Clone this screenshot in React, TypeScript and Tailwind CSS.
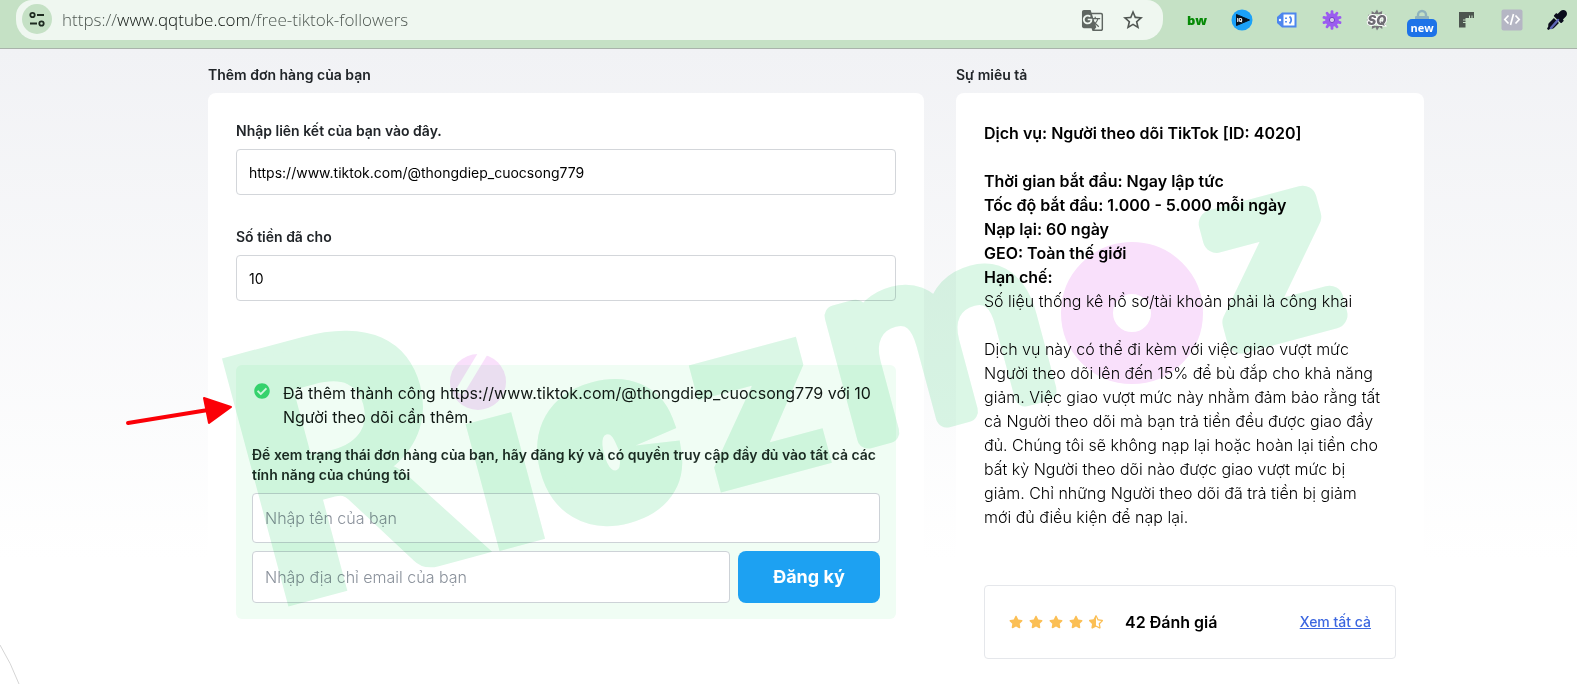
import { useState } from "react";
import type { FormEvent, ReactNode } from "react";
import { FaCheckCircle, FaEyeDropper, FaStar, FaStarHalfAlt } from "react-icons/fa";
import { MdGTranslate, MdStarBorder } from "react-icons/md";

type Extension = {
  name: string;
  icon: ReactNode;
};

const teeth = [0, 36, 72, 108, 144, 180, 216, 252, 288, 324];
const spikes = [0, 30, 60, 90, 120, 150, 180, 210, 240, 270, 300, 330];

const extensions: Extension[] = [
  {
    name: "BuiltWith",
    icon: (
      <svg viewBox="0 0 24 24" className="size-6">
        <text
          x="12"
          y="17"
          textAnchor="middle"
          className="fill-[#078a07] font-['Open_Sans',sans-serif] text-[13px] font-extrabold"
        >
          bw
        </text>
      </svg>
    ),
  },
  {
    name: "IQ",
    icon: (
      <svg viewBox="0 0 24 24" className="size-6">
        <circle cx="12" cy="12" r="10.5" fill="#1ba1f8" />
        <path d="M6.5 6.5 19.5 12 6.5 17.5Z" fill="#06131f" stroke="#06131f" strokeLinejoin="round" />
        <text x="7" y="14" fill="#fff" className="font-['Inter',sans-serif] text-[5px] font-black">
          IQ
        </text>
      </svg>
    ),
  },
  {
    name: "Tag",
    icon: (
      <svg viewBox="0 0 24 24" className="size-6">
        <path d="M7 4.5h14.5v15H7L2 15V9Z" fill="#4d86ee" />
        <rect x="8.5" y="6.5" width="11" height="11" fill="#fff" />
        <circle cx="5" cy="12" r="1.2" fill="#fff" />
        <path d="M11 9.5v1.6M11 13v1.6M14.5 8.5c2.3 1.8 2.3 5.2 0 7" stroke="#4d86ee" strokeWidth="1.8" fill="none" />
      </svg>
    ),
  },
  {
    name: "Settings",
    icon: (
      <svg viewBox="0 0 24 24" className="size-6">
        {teeth.map((deg) => (
          <rect
            key={deg}
            x="10.6"
            y="2.2"
            width="2.8"
            height="6"
            rx="1.2"
            fill="#9b5cf0"
            transform={`rotate(${deg} 12 12)`}
          />
        ))}
        <circle cx="12" cy="12" r="6.8" fill="#9b5cf0" />
        <circle cx="12" cy="12" r="2.6" fill="#d3cbe6" stroke="#7540c6" />
      </svg>
    ),
  },
  {
    name: "SQ",
    icon: (
      <svg viewBox="0 0 24 24" className="size-6">
        {spikes.map((deg) => (
          <path key={deg} d="M9 6 12 1.5 14 6Z" fill="#77767b" transform={`rotate(${deg} 12 12)`} />
        ))}
        <text
          x="12"
          y="17"
          textAnchor="middle"
          className="fill-[#6f6d74] stroke-white stroke-2 font-['Inter',sans-serif] text-[13px] font-black italic"
          style={{ paintOrder: "stroke" }}
        >
          SQ
        </text>
      </svg>
    ),
  },
  {
    name: "Lock",
    icon: (
      <span className="relative flex size-6 justify-center">
        <svg viewBox="0 0 24 24" className="size-6">
          <path d="M8 10V7a4 4 0 0 1 8 0v3" fill="none" stroke="#8fb3bd" strokeWidth="2.4" />
          <rect x="5" y="8" width="14" height="10" rx="1" fill="#8fb3bd" />
        </svg>
        <span className="absolute top-[11px] rounded-[5px] bg-[#1d73e8] px-[3px] font-['Open_Sans',sans-serif] text-[11px] leading-[18px] font-bold text-white">
          new
        </span>
      </span>
    ),
  },
  {
    name: "Ruler",
    icon: (
      <svg viewBox="0 0 24 24" className="size-6">
        <path
          d="M4 4h15v6h-1.5V7.5h-1V10H15V7.5h-1V10h-3.500v1.500H8v1h2.500V14H8v1h2.500v4.500H4Z"
          fill="#4c554f"
        />
      </svg>
    ),
  },
  {
    name: "Code",
    icon: (
      <svg viewBox="0 0 24 24" className="size-6">
        <rect x="1.500" y="1.500" width="21" height="21" rx="2" fill="#b5b6c4" />
        <path
          d="M8.500 7.500 4.800 11.500l3.700 4M15.500 7.500l3.700 4-3.700 4M13.500 6l-3 11"
          fill="none"
          stroke="#fff"
          strokeWidth="1.700"
        />
      </svg>
    ),
  },
  {
    name: "Color picker",
    icon: (
      <span className="relative block size-6">
        <FaEyeDropper className="m-[2px] size-5 text-[#0b0d1c]" />
        <svg viewBox="0 0 24 24" className="absolute inset-0 size-6">
          <path d="M6 18 13 10" stroke="#5d66b5" strokeWidth="2.500" strokeLinecap="round" />
        </svg>
      </span>
    ),
  },
];

const details = [
  "Thời gian bắt đầu: Ngay lập tức",
  "Tốc độ bắt đầu: 1.000 - 5.000 mỗi ngày",
  "Nạp lại: 60 ngày",
  "GEO: Toàn thế giới",
  "Hạn chế:",
];

function BrowserBar() {
  return (
    <header className="flex h-[49px] items-start border-b border-[#a9b3ab] bg-[#c5e1c5]">
      <div className="ml-4 flex h-10 flex-1 items-center rounded-t-2xl rounded-b-[20px] bg-[#eff7f0] pr-[18px] pl-[6px]">
        <button
          aria-label="Site information"
          className="mb-[2px] flex size-[30px] items-center justify-center rounded-full bg-[#c5e1c5]"
        >
          <svg viewBox="0 0 18 18" className="size-[18px]" fill="none" stroke="#1d2b20" strokeWidth="1.800">
            <circle cx="4.500" cy="5" r="2.200" />
            <path d="M9 5h7M2 13.500h7" />
            <circle cx="13.500" cy="13.500" r="2.200" />
          </svg>
        </button>
        <p className="ml-[10px] flex-1 font-['Open_Sans',sans-serif] text-[17px] font-light text-[#4f5852]">
          https://<span className="text-[#0c120e]">www.qqtube.com</span>/free-tiktok-followers
        </p>
        <button aria-label="Translate">
          <MdGTranslate className="size-[23px] text-[#5f6661]" />
        </button>
        <button aria-label="Bookmark" className="ml-[17px]">
          <MdStarBorder className="size-6 text-[#515753]" />
        </button>
      </div>
      <div className="mr-2 ml-[22px] flex h-10 items-center gap-[21px]">
        {extensions.map((item) => (
          <button key={item.name} aria-label={item.name} className="size-6">
            {item.icon}
          </button>
        ))}
      </div>
    </header>
  );
}

function OrderForm() {
  const [link, setLink] = useState("https://www.tiktok.com/@thongdiep_cuocsong779");
  const [amount, setAmount] = useState("10");
  const [name, setName] = useState("");
  const [email, setEmail] = useState("");

  const handleSubmit = (e: FormEvent) => {
    e.preventDefault();
  };

  return (
    <section className="flex flex-col">
      <h2 className="text-sm leading-5 font-semibold text-[#212529]">Thêm đơn hàng của bạn</h2>
      <div className="mt-2 flex-1 rounded-lg bg-white p-7">
        <label htmlFor="link" className="block text-sm leading-5 font-semibold text-[#212529]">
          Nhập liên kết của bạn vào đây.
        </label>
        <input
          id="link"
          className="mt-2 h-[46px] w-full rounded-sm border border-[#d3d6da] px-3 text-sm text-black"
          value={link}
          onChange={(e) => setLink(e.target.value)}
        />
        <label htmlFor="amount" className="mt-8 block text-sm leading-5 font-semibold text-[#212529]">
          Số tiền đã cho
        </label>
        <input
          id="amount"
          className="mt-2 h-[46px] w-full rounded-sm border border-[#d3d6da] px-3 text-sm text-black"
          value={amount}
          onChange={(e) => setAmount(e.target.value)}
        />

        <form onSubmit={handleSubmit} className="mt-16 rounded-md bg-[#f0fdf4] p-4">
          <div className="flex gap-[13px]">
            <FaCheckCircle className="mt-[2px] ml-[2px] size-4 shrink-0 text-[#3dd978]" />
            <p className="text-[#101814]">
              Đã thêm thành công https://www.tiktok.com/@thongdiep_cuocsong779 với 10 Người theo dõi cần thêm.
            </p>
          </div>
          <p className="mt-4 text-sm leading-5 font-semibold text-[#1d2b24]">
            Để xem trạng thái đơn hàng của bạn, hãy đăng ký và có quyền truy cập đầy đủ vào tất cả các tính năng
            của chúng tôi
          </p>
          <input
            aria-label="Nhập tên của bạn"
            placeholder="Nhập tên của bạn"
            className="mt-2 h-[50px] w-full rounded-sm border border-[#cdd2d7] bg-white px-3 font-light placeholder:text-[#8a919b]"
            value={name}
            onChange={(e) => setName(e.target.value)}
          />
          <div className="mt-2 flex gap-2">
            <input
              type="email"
              aria-label="Nhập địa chỉ email của bạn"
              placeholder="Nhập địa chỉ email của bạn"
              className="h-[52px] min-w-0 flex-1 rounded-sm border border-[#cdd2d7] bg-white px-3 font-light placeholder:text-[#8a919b]"
              value={email}
              onChange={(e) => setEmail(e.target.value)}
            />
            <button type="submit" className="w-[142px] rounded-lg bg-[#1da1f2] text-lg font-bold text-white">
              Đăng ký
            </button>
          </div>
        </form>
      </div>
    </section>
  );
}

function Description() {
  return (
    <section className="flex flex-col">
      <h2 className="text-sm leading-5 font-semibold text-[#212529]">Sự miêu tả</h2>
      <div className="mt-2 flex-1 rounded-lg bg-white p-7 font-light text-black">
        <p className="mb-6 font-semibold">Dịch vụ: Người theo dõi TikTok [ID: 4020]</p>
        {details.map((line) => (
          <p key={line} className="font-semibold">
            {line}
          </p>
        ))}
        <p>Số liệu thống kê hồ sơ/tài khoản phải là công khai</p>
        <p className="mt-6 pr-3">
          Dịch vụ này có thể đi kèm với việc giao vượt mức Người theo dõi lên đến 15% để bù đắp cho khả năng giảm.
          Việc giao vượt mức này nhằm đảm bảo rằng tất cả Người theo dõi mà bạn trả tiền đều được giao đầy đủ. Chúng
          tôi sẽ không nạp lại hoặc hoàn lại tiền cho bất kỳ Người theo dõi nào được giao vượt mức bị giảm. Chỉ những
          Người theo dõi đã trả tiền bị giảm mới đủ điều kiện để nạp lại.
        </p>
        <div className="mt-14 flex h-[74px] items-center rounded-sm border border-[#e5e7eb] px-6">
          <div className="flex gap-[6px] text-[#fbbf55]">
            <FaStar className="size-[14px]" />
            <FaStar className="size-[14px]" />
            <FaStar className="size-[14px]" />
            <FaStar className="size-[14px]" />
            <FaStarHalfAlt className="size-[14px]" />
          </div>
          <p className="ml-[22px] flex-1 font-semibold">42 Đánh giá</p>
          <a href="#reviews" className="text-sm font-medium text-[#3b66e0] underline">
            Xem tất cả
          </a>
        </div>
      </div>
    </section>
  );
}

function Watermark() {
  return (
    <svg
      viewBox="0 0 1577 684"
      aria-hidden="true"
      className="pointer-events-none absolute top-0 left-0 w-full overflow-visible mix-blend-multiply"
    >
      <mask id="slash">
        <rect width="1577" height="684" fill="#fff" />
        <path d="M488 345 459 393" stroke="#000" strokeWidth="9" />
      </mask>
      <g fill="#dbf7e6" stroke="#dbf7e6">
        <text
          transform="translate(267 607) rotate(-15)"
          fontSize="340"
          strokeWidth="10"
          className="font-['Lato',sans-serif] font-black"
        >
          R
        </text>
        <g className="font-['Inter',sans-serif] font-black">
          <text transform="translate(488 554) rotate(-15)" fontSize="240" stroke="none">
            ı
          </text>
          <text transform="translate(560 528) rotate(-15)" fontSize="220" strokeWidth="22">
            c
          </text>
          <text transform="translate(708 496) rotate(-15)" fontSize="240" stroke="none">
            z
          </text>
        </g>
        <g className="font-['DejaVu_Sans',sans-serif]" strokeLinejoin="round" strokeLinecap="round">
          <text transform="translate(848 443) rotate(-15)" fontSize="230" strokeWidth="22">
            m
          </text>
          <text transform="translate(1232 342) rotate(-15)" fontSize="218" strokeWidth="28">
            z
          </text>
        </g>
      </g>
      <circle cx="478" cy="382" r="28" fill="#f9e0fb" mask="url(#slash)" />
      <circle cx="1132" cy="313" r="45" fill="none" stroke="#f9e0fb" strokeWidth="52" />
    </svg>
  );
}

function Marks() {
  return (
    <svg viewBox="0 0 1577 684" aria-hidden="true" className="pointer-events-none absolute top-0 left-0 w-full">
      <path d="M128 423 208 410" stroke="#fb0007" strokeWidth="4" strokeLinecap="round" />
      <path d="M204 398 231 407 209 423Z" fill="#fb0007" stroke="#fb0007" strokeWidth="2" strokeLinejoin="round" />
      <path d="M0 645Q11 663 19 684" fill="none" stroke="#d5d5d5" />
    </svg>
  );
}

export default function App() {
  return (
    <div className="relative flex min-h-screen flex-col overflow-hidden bg-white font-['Inter',sans-serif]">
      <BrowserBar />
      <main className="grid flex-1 grid-cols-[716fr_468fr] gap-8 bg-linear-to-b from-[#f1f2f5] to-white to-80% pt-4 pr-[153px] pl-[208px]">
        <OrderForm />
        <Description />
      </main>
      <Watermark />
      <Marks />
    </div>
  );
}
